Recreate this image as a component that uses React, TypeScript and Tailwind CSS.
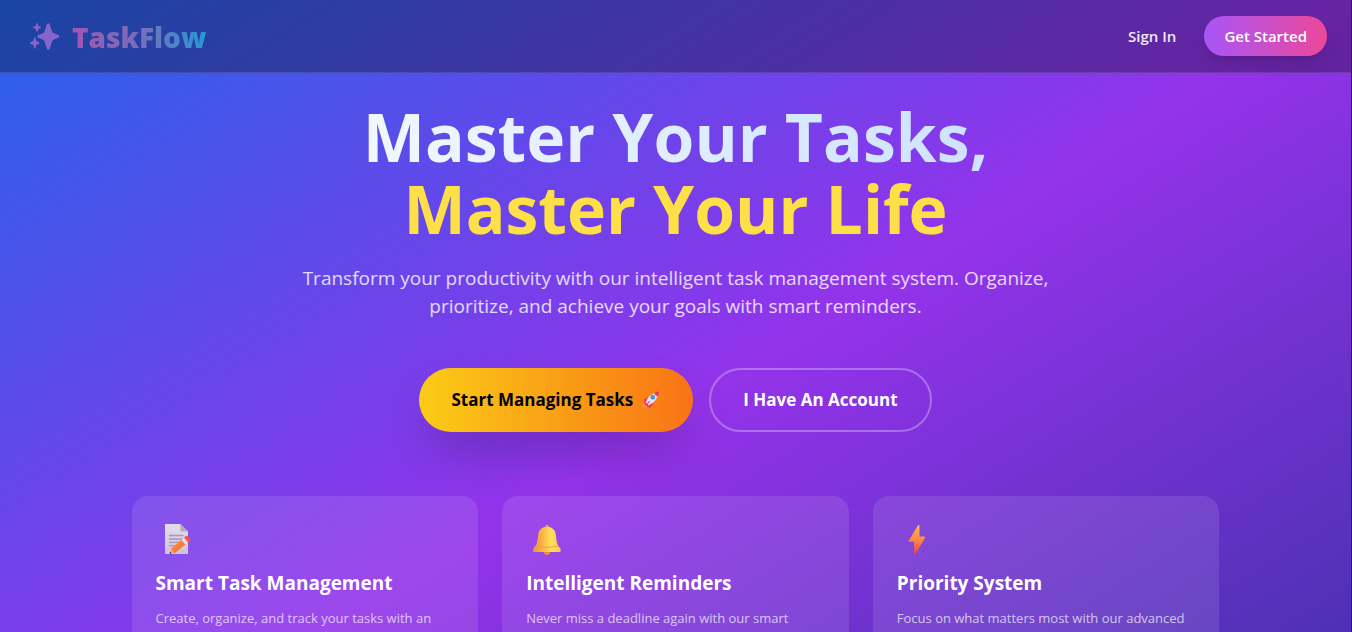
import type { ReactNode } from "react";

function SparklesIcon() {
  return (
    <svg viewBox="0 0 32 32" className="size-8" fill="#8564cb" aria-hidden="true">
      <path d="M17.8 3.2Q19.3 1.2 20.8 3.2L23 10.2Q23.6 12 25.4 12.6L29.4 13.9Q31.4 15.3 29.4 16.7L25.4 18.2Q23.6 18.8 23 20.6L20.8 27.7Q19.3 29.8 17.8 27.7L15.6 20.6Q15 18.8 13.2 18.2L9.2 16.7Q7.2 15.3 9.2 13.9L13.2 12.6Q15 12 15.6 10.2Z" />
      <path d="M7.4 2.6Q8 1.6 8.6 2.6L9.3 4.9L11.7 5.8Q12.6 6.4 11.7 7L9.3 7.9L8.6 10.2Q8 11.2 7.4 10.2L6.7 7.9L4.3 7Q3.4 6.4 4.3 5.8L6.7 4.9Z" />
      <path d="M5.1 16.9Q5.8 15.8 6.5 16.9L7.4 20L10.2 21.3Q11.3 22 10.2 22.7L7.4 24L6.5 27.1Q5.8 28.2 5.1 27.1L4.2 24L1.4 22.7Q0.3 22 1.4 21.3L4.2 20Z" />
    </svg>
  );
}

function RocketIcon() {
  return (
    <svg viewBox="0 0 20 20" className="size-5" aria-hidden="true">
      <path d="M1.5 17.8Q1.2 14 4 12.6L7 15.8Q5.4 18.6 1.5 17.8Z" fill="#ff8a4a" />
      <path d="M7.2 7.6Q3.2 7.8 2.4 12.6L6 12Z" fill="#f0386c" />
      <path d="M12 12.4Q12.2 16.6 7.6 18.4L7.4 14Z" fill="#f0386c" />
      <path d="M4.6 13.2Q6.2 4.6 17.6 1.4Q17.2 11 7 15.6Z" fill="#e9e2ef" />
      <path d="M4.2 12.2L7.8 15.8L6.6 16.8L3.4 13.6Z" fill="#d62c68" />
      <path d="M13 2.9Q15.2 1.8 18 1.2Q18 4 16.6 6.4Q14 5.6 13 2.9Z" fill="#ef3454" />
      <circle cx="11.8" cy="7.2" r="2.2" fill="#2b6fc4" />
      <circle cx="11.8" cy="7.2" r="1.5" fill="#4aa8f0" />
      <path d="M6.2 13.8L8.4 11.6" stroke="#f0386c" strokeWidth="1.2" strokeLinecap="round" />
    </svg>
  );
}

function MemoIcon() {
  return (
    <svg viewBox="0 0 40 40" className="size-10" aria-hidden="true">
      <defs>
        <linearGradient id="memo-page" x1="0" y1="0" x2="0" y2="1">
          <stop offset="0" stopColor="#e4dcec" />
          <stop offset="1" stopColor="#cfc3dc" />
        </linearGradient>
        <linearGradient id="memo-pencil" x1="0" y1="0" x2="1" y2="1">
          <stop offset="0" stopColor="#ff9a3c" />
          <stop offset="1" stopColor="#f2652f" />
        </linearGradient>
      </defs>
      <path d="M9 4H24.4L32 11.6V34H9Z" fill="url(#memo-page)" />
      <path d="M24.4 4L32 11.6H24.4Z" fill="#b4a6c4" />
      <path d="M13 15.5H27.5M13 19H27.5M13 22.3H25M13 25.6H21" stroke="#a698b8" strokeWidth="1.3" />
      <path d="M13.6 33.6L15 28.8L18.4 33Z" fill="#e9b48c" />
      <path d="M13.6 33.8L14.2 31.6L15.8 33.4Z" fill="#4a3040" />
      <path d="M15 28.8L25.4 19.8L29.4 24.4L18.6 33.2Q16 32 15 28.8Z" fill="url(#memo-pencil)" />
      <path d="M25.4 19.8L28 17.6L32 22.2L29.4 24.4Z" fill="#e6dcec" />
      <path d="M28 17.6L30 16Q31 15.4 31.8 16.2L34.6 19.6Q35 20.4 34.2 21L32 22.6Z" fill="#fb5548" />
    </svg>
  );
}

function BellIcon() {
  return (
    <svg viewBox="0 0 40 40" className="size-10" aria-hidden="true">
      <defs>
        <linearGradient id="bell-body" x1="0" y1="0" x2="1" y2="0">
          <stop offset="0" stopColor="#e8963c" />
          <stop offset="0.3" stopColor="#f7b043" />
          <stop offset="0.65" stopColor="#ffdf58" />
          <stop offset="1" stopColor="#fbc84c" />
        </linearGradient>
      </defs>
      <circle cx="21" cy="6.4" r="1.6" fill="#f2a63c" />
      <path d="M17.5 31.5H24.5Q24 35 21 35Q18 35 17.5 31.5Z" fill="#f08a42" />
      <path d="M21 6.8C26 6.8 29.4 10 29.8 14.5C30.3 20 31 24 32.4 26L34.6 29V31.2Q34.6 32 33.8 32H8Q7 32 7 31.2V29L9.4 26C11 24 11.6 20 12.2 14.5C12.6 10 16 6.8 21 6.8Z" fill="url(#bell-body)" />
      <path d="M9.6 26.2Q21 28.8 32.2 26.2" stroke="#eda33c" strokeWidth="1" fill="none" />
    </svg>
  );
}

function BoltIcon() {
  return (
    <svg viewBox="0 0 40 40" className="size-10" aria-hidden="true">
      <defs>
        <linearGradient id="bolt-fill" x1="0" y1="0" x2="0" y2="1">
          <stop offset="0" stopColor="#ffb443" />
          <stop offset="0.5" stopColor="#fb8a45" />
          <stop offset="1" stopColor="#f03f4c" />
        </linearGradient>
      </defs>
      <path d="M21 5.2Q22.6 4.4 22.5 6V16.6H27.4Q28.6 16.8 28 18L18.8 33.4Q17.2 34.6 17.1 33V21.8H12.2Q11.2 21.6 11.8 20.4Z" fill="url(#bolt-fill)" />
    </svg>
  );
}

type Feature = { icon: ReactNode; title: string; text: string };

const features: Feature[] = [
  { icon: <MemoIcon />, title: "Smart Task Management", text: "Create, organize, and track your tasks with an" },
  { icon: <BellIcon />, title: "Intelligent Reminders", text: "Never miss a deadline again with our smart" },
  { icon: <BoltIcon />, title: "Priority System", text: "Focus on what matters most with our advanced" },
];

export default function App() {
  return (
    <div className="bg-[#2a2438] pr-px font-['Open_Sans','Noto_Sans',sans-serif]">
      <div className="min-h-screen bg-linear-to-br/srgb from-[#2563eb] via-[#9333ea] to-[#3730a3] pb-8">
        <header className="flex h-[73px] items-center justify-between border-b border-white/10 bg-black/30 px-6">
          <a href="#" className="flex items-center gap-2 pt-0.5 pl-[5px]">
            <SparklesIcon />
            <span className="bg-linear-to-r/srgb from-[#a156b2] via-[#7a6cb8] to-[#2599d2] bg-clip-text pl-[3px] text-[28px] leading-9 font-extrabold text-transparent">
              TaskFlow
            </span>
          </a>
          <nav className="flex items-center gap-3">
            <a href="#signin" className="px-4 py-2 text-[15px] leading-6 font-semibold text-white/90">
              Sign In
            </a>
            <button type="button" className="rounded-full bg-linear-to-r/srgb from-[#a855f7] to-[#ec4899] px-5 py-2 text-[15px] leading-6 font-semibold text-white shadow-lg">
              Get Started
            </button>
          </nav>
        </header>

        <main className="mx-auto flex max-w-6xl flex-col items-center px-8 pt-[27px]">
          <h1 className="w-full text-center text-[66px] leading-[72px] font-bold">
            <span className="block bg-linear-to-r/srgb from-white to-[#bfdbfe] bg-clip-text text-transparent">Master Your Tasks,</span>
            <span className="block text-[#fde047]">Master Your Life</span>
          </h1>
          <p className="mt-5 max-w-3xl text-center text-[19px] leading-7 text-white/80">
            Transform your productivity with our intelligent task management system. Organize, prioritize, and achieve your goals with smart reminders.
          </p>
          <div className="mt-12 flex flex-wrap justify-center gap-4">
            <button type="button" className="flex h-16 items-center gap-2 rounded-full bg-linear-to-r/srgb from-[#facc15] to-[#f97316] px-8 text-[17px] font-bold text-black shadow-2xl">
              Start Managing Tasks
              <RocketIcon />
            </button>
            <button type="button" className="h-16 rounded-full border-2 border-white/30 px-8 text-[17px] font-bold text-white">
              I Have An Account
            </button>
          </div>
          <section className="mt-16 grid w-full grid-cols-3 gap-6">
            {features.map((f) => (
              <article key={f.title} className="min-h-[308px] rounded-2xl bg-white/10 p-6">
                {f.icon}
                <h2 className="mt-2 text-[19px] leading-[30px] font-bold text-white">{f.title}</h2>
                <p className="mt-2.5 text-[13px] leading-5 text-white/70">{f.text}</p>
              </article>
            ))}
          </section>
        </main>
      </div>
    </div>
  );
}
